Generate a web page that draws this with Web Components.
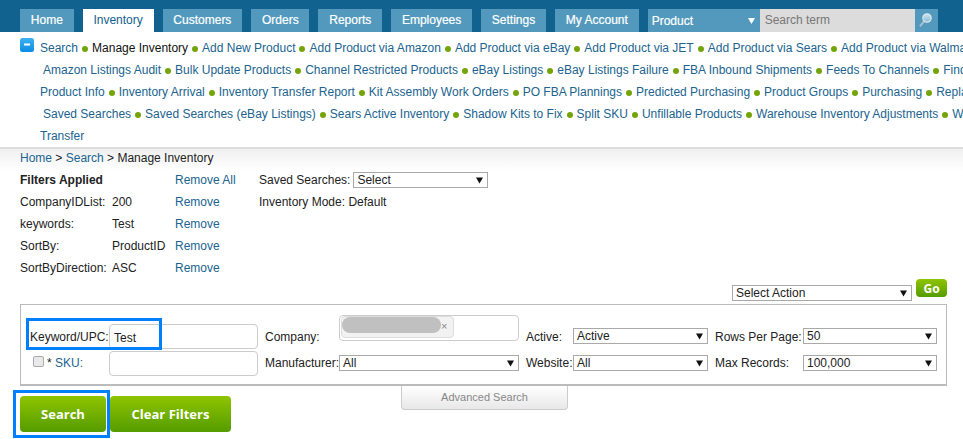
<!DOCTYPE html>
<html lang="en">
  <head>
    <meta charset="UTF-8" />
    <title>Manage Inventory</title>
    <style>
      html, body {
        margin: 0;
        height: 439px;
        overflow: hidden;
        background: #fff;
      }
      body {
        font: 12px "Liberation Sans", Arial, sans-serif;
        color: #222;
      }
    </style>
  </head>
  <body>
    <top-bar>
      <nav-tab>Home</nav-tab>
      <nav-tab active>Inventory</nav-tab>
      <nav-tab>Customers</nav-tab>
      <nav-tab>Orders</nav-tab>
      <nav-tab>Reports</nav-tab>
      <nav-tab>Employees</nav-tab>
      <nav-tab>Settings</nav-tab>
      <nav-tab>My Account</nav-tab>
    </top-bar>

    <link-menu>
      <menu-row first>
        <menu-link>Search</menu-link>
        <menu-link current>Manage Inventory</menu-link>
        <menu-link>Add New Product</menu-link>
        <menu-link>Add Product via Amazon</menu-link>
        <menu-link>Add Product via eBay</menu-link>
        <menu-link>Add Product via JET</menu-link>
        <menu-link>Add Product via Sears</menu-link>
        <menu-link>Add Product via Walmart</menu-link>
      </menu-row>
      <menu-row indent>
        <menu-link>Amazon Listings Audit</menu-link>
        <menu-link>Bulk Update Products</menu-link>
        <menu-link>Channel Restricted Products</menu-link>
        <menu-link>eBay Listings</menu-link>
        <menu-link>eBay Listings Failure</menu-link>
        <menu-link>FBA Inbound Shipments</menu-link>
        <menu-link>Feeds To Channels</menu-link>
        <menu-link>Find Products</menu-link>
      </menu-row>
      <menu-row>
        <menu-link>Product Info</menu-link>
        <menu-link>Inventory Arrival</menu-link>
        <menu-link>Inventory Transfer Report</menu-link>
        <menu-link>Kit Assembly Work Orders</menu-link>
        <menu-link>PO FBA Plannings</menu-link>
        <menu-link>Predicted Purchasing</menu-link>
        <menu-link>Product Groups</menu-link>
        <menu-link>Purchasing</menu-link>
        <menu-link>Replacements</menu-link>
      </menu-row>
      <menu-row indent>
        <menu-link>Saved Searches</menu-link>
        <menu-link>Saved Searches (eBay Listings)</menu-link>
        <menu-link>Sears Active Inventory</menu-link>
        <menu-link>Shadow Kits to Fix</menu-link>
        <menu-link>Split SKU</menu-link>
        <menu-link>Unfillable Products</menu-link>
        <menu-link>Warehouse Inventory Adjustments</menu-link>
        <menu-link>Warehouse</menu-link>
      </menu-row>
      <menu-row>
        <menu-link>Transfer</menu-link>
      </menu-row>
    </link-menu>

    <filter-panel></filter-panel>
    <search-form></search-form>

    <template id="top-bar-template">
      <style>
        :host {
          display: flex;
          height: 23px;
          padding: 9px 0 0 20px;
          background: #12628f;
          color: #fff;
        }
        .tabs {
          display: flex;
          gap: 9px;
        }
        .search {
          display: flex;
          margin-left: 9px;
        }
        .type {
          position: relative;
          box-sizing: border-box;
          width: 112px;
          padding: 5px 0 0 4px;
          background: #5299bd;
          color: #fff;
          -webkit-text-stroke: 0.2px #fff;
        }
        .type svg {
          position: absolute;
          right: 5px;
          top: 8px;
        }
        .term {
          box-sizing: border-box;
          width: 155px;
          padding: 4px 0 0 5px;
          background: #dcdcdc;
          color: #777;
        }
        .go {
          display: flex;
          justify-content: center;
          width: 23px;
          padding-top: 3px;
          background: #5299bd;
        }
      </style>
      <div class="tabs"><slot></slot></div>
      <div class="search">
        <div class="type">
          Product
          <svg width="7" height="7" viewBox="0 0 7 7"><path d="M0 1h7L3.5 7z" fill="#fff" /></svg>
        </div>
        <div class="term">Search term</div>
        <div class="go">
          <svg width="16" height="16" viewBox="0 0 16 16">
            <defs>
              <linearGradient id="glass" x1="0" y1="0" x2="0" y2="1">
                <stop offset="0" stop-color="#cfe4ef" />
                <stop offset="1" stop-color="#86b8d3" />
              </linearGradient>
            </defs>
            <path d="M6 9.4L2.5 13.6" stroke="#a9bfcc" stroke-width="2.2" stroke-linecap="round" />
            <circle cx="9" cy="6" r="4.2" fill="url(#glass)" stroke="#d6e6ee" stroke-width="1.2" />
          </svg>
        </div>
      </div>
    </template>

    <template id="nav-tab-template">
      <style>
        :host {
          display: block;
          padding: 4px 10.8px 0;
          background: #5299bd;
          color: #fff;
          line-height: 15px;
          white-space: nowrap;
          -webkit-text-stroke: 0.2px #fff;
        }
        :host([active]) {
          background: #fff;
          color: #12628f;
          -webkit-text-stroke: 0;
        }
      </style>
      <slot></slot>
    </template>

    <template id="link-menu-template">
      <style>
        :host {
          display: block;
          position: relative;
          box-sizing: border-box;
          height: 117px;
          padding: 5px 0 0 40px;
          border-bottom: 2px solid #ddd;
          overflow: hidden;
        }
        .toggle {
          position: absolute;
          left: 20px;
          top: 6px;
        }
      </style>
      <svg class="toggle" width="14" height="14" viewBox="0 0 14 14">
        <defs>
          <linearGradient id="toggle-fill" x1="0" y1="0" x2="0" y2="1">
            <stop offset="0" stop-color="#3db2f2" />
            <stop offset="1" stop-color="#0b8ce2" />
          </linearGradient>
        </defs>
        <rect width="14" height="14" rx="2.5" fill="url(#toggle-fill)" />
        <rect x="4" y="5.5" width="6" height="2" fill="#fff" />
      </svg>
      <slot></slot>
    </template>

    <template id="menu-row-template">
      <style>
        :host {
          display: flex;
          height: 22px;
          align-items: center;
          white-space: nowrap;
        }
        :host([indent]) {
          padding-left: 3px;
        }
      </style>
      <slot></slot>
    </template>

    <template id="menu-link-template">
      <style>
        :host {
          display: inline-flex;
          align-items: center;
          flex: none;
          color: #20648f;
        }
        :host([current]) {
          color: #111;
        }
        :host(:not(:first-child))::before {
          content: "";
          width: 6px;
          height: 6px;
          margin: 1px 4px 0 4px;
          border-radius: 50%;
          background: #74a40a;
        }
      </style>
      <slot></slot>
    </template>

    <template id="fake-select-template">
      <style>
        :host {
          display: flex;
          align-items: center;
          justify-content: space-between;
          box-sizing: border-box;
          height: 16px;
          padding: 0 4px 0 3px;
          border: 1px solid #a9a9a9;
          background: #fff;
          color: #222;
        }
      </style>
      <slot></slot>
      <svg width="7" height="7" viewBox="0 0 7 7"><path d="M0 .5h7L3.5 6.5z" fill="#111" /></svg>
    </template>

    <template id="green-button-template">
      <style>
        :host {
          display: flex;
          align-items: center;
          justify-content: center;
          box-sizing: border-box;
          border-radius: 4px;
          background: linear-gradient(#8fc400, #559c00);
          color: #fff;
          font: bold 13px "Open Sans", sans-serif;
        }
      </style>
      <slot></slot>
    </template>

    <template id="filter-panel-template">
      <style>
        :host {
          display: block;
          height: 155px;
          padding: 0 20px;
          background: linear-gradient(#f0f0f0, #fff 22px);
        }
        .crumb {
          height: 20px;
          line-height: 18px;
          color: #222;
        }
        a {
          color: #20648f;
        }
        .body {
          display: flex;
        }
        .filters {
          display: grid;
          grid-template-columns: 92px 63px 84px;
          grid-auto-rows: 22px;
          align-items: center;
        }
        .saved {
          display: grid;
          grid-auto-rows: 22px;
          align-items: center;
        }
        .saved div {
          display: flex;
          align-items: center;
          gap: 3px;
        }
        fake-select {
          width: 135px;
        }
        .action {
          display: flex;
          justify-content: flex-end;
          align-items: flex-start;
          gap: 4px;
          height: 25px;
          margin-right: -4px;
        }
        .action fake-select {
          width: 180px;
          margin-top: 6px;
        }
        .action green-button {
          width: 31px;
          height: 18px;
          font-size: 12px;
        }
      </style>
      <div class="crumb"><a>Home</a> &gt; <a>Search</a> &gt; Manage Inventory</div>
      <div class="body">
        <div class="filters">
          <b>Filters Applied</b><span></span><a>Remove All</a>
          <span>CompanyIDList:</span><span>200</span><a>Remove</a>
          <span>keywords:</span><span>Test</span><a>Remove</a>
          <span>SortBy:</span><span>ProductID</span><a>Remove</a>
          <span>SortByDirection:</span><span>ASC</span><a>Remove</a>
        </div>
        <div class="saved">
          <div>Saved Searches: <fake-select>Select</fake-select></div>
          <div>Inventory Mode: Default</div>
        </div>
      </div>
      <div class="action">
        <fake-select>Select Action</fake-select>
        <green-button>Go</green-button>
      </div>
    </template>

    <template id="search-form-template">
      <style>
        :host {
          display: block;
          position: relative;
          color: #222;
        }
        .box {
          box-sizing: border-box;
          height: 82px;
          margin: 0 16px 0 20px;
          padding: 9px 9px 0;
          border: 1px solid #bbb;
          border-bottom-width: 2px;
          display: grid;
          grid-template-columns: 79px 149px 81px 180px 54px 135px 95px 134px;
          grid-template-rows: 35px 26px;
          row-gap: 1px;
          align-items: center;
          white-space: nowrap;
        }
        .label-1, .sel-1 {
          align-self: end;
          margin-bottom: 5px;
        }
        .gap { margin-left: 7px; }
        .text-input {
          box-sizing: border-box;
          width: 149px;
          height: 25px;
          padding: 3px 4px 0;
          border: 1px solid #ccc;
          border-radius: 4px;
          line-height: 20px;
          align-self: end;
        }
        .company {
          box-sizing: border-box;
          height: 26px;
          padding: 0 1px;
          border: 1px solid #ccc;
          border-radius: 4px;
          align-self: start;
          margin-top: 1px;
        }
        .chip {
          display: flex;
          align-items: flex-start;
          box-sizing: border-box;
          width: 113px;
          height: 22px;
          border: 1px solid #ddd;
          border-radius: 4px;
          background: #f2f2f2;
          color: #888;
          font-size: 11px;
          line-height: 18px;
        }
        .chip i {
          width: 99px;
          height: 16px;
          border-radius: 8px;
          background: #c0c0c0;
        }
        .sku {
          display: flex;
          align-items: center;
          padding-left: 3px;
          gap: 3px;
        }
        .sku a { color: #20648f; }
        .check {
          width: 9px;
          height: 9px;
          margin-top: -3px;
          border: 1px solid #aaa;
          border-radius: 2px;
          background: #e9e9e9;
        }
        .actions {
          display: flex;
          align-items: flex-start;
          padding-left: 20px;
        }
        .actions green-button {
          height: 36px;
          margin-top: 10px;
          font-size: 13px;
        }
        .advanced {
          box-sizing: border-box;
          width: 167px;
          height: 24px;
          margin-left: 170px;
          border: 1px solid #ccc;
          border-top: 0;
          border-radius: 0 0 4px 4px;
          background: linear-gradient(#fff, #e8e8e8);
          color: #888;
          font-size: 11px;
          line-height: 23px;
          text-align: center;
        }
        .mark {
          position: absolute;
          box-sizing: border-box;
          border: 3px solid #007fff;
        }
      </style>
      <div class="box">
        <span class="label-1">Keyword/UPC:</span>
        <div class="text-input">Test</div>
        <span class="gap label-1">Company:</span>
        <div class="company"><div class="chip"><i></i>×</div></div>
        <span class="gap label-1">Active:</span>
        <fake-select class="sel-1">Active</fake-select>
        <span class="gap label-1">Rows Per Page:</span>
        <fake-select class="sel-1">50</fake-select>

        <div class="sku"><span class="check"></span><span>* <a>SKU:</a></span></div>
        <div class="text-input"></div>
        <span class="gap">Manufacturer:</span>
        <fake-select>All</fake-select>
        <span class="gap">Website:</span>
        <fake-select>All</fake-select>
        <span class="gap">Max Records:</span>
        <fake-select>100,000</fake-select>
      </div>
      <div class="actions">
        <green-button style="width:86px">Search</green-button>
        <green-button style="width:121px;margin-left:4px">Clear Filters</green-button>
        <div class="advanced">Advanced Search</div>
      </div>
      <div class="mark" style="left:26px;top:14px;width:136px;height:32px"></div>
      <div class="mark" style="left:13px;top:86px;width:97px;height:48px"></div>
    </template>

    <script>
      // every element just clones its own template into an open shadow root
      function define(name) {
        const template = document.getElementById(name + "-template");
        customElements.define(
          name,
          class extends HTMLElement {
            constructor() {
              super();
              this.attachShadow({ mode: "open" });
              this.shadowRoot.appendChild(template.content.cloneNode(true));
            }
          }
        );
      }

      [
        "top-bar",
        "nav-tab",
        "link-menu",
        "menu-row",
        "menu-link",
        "fake-select",
        "green-button",
        "filter-panel",
        "search-form",
      ].forEach(define);
    </script>
  </body>
</html>
